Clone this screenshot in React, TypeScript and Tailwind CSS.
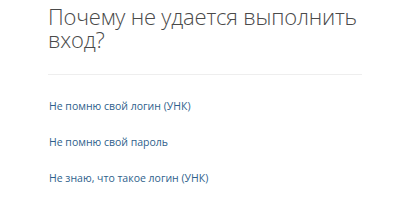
export default function App() {
  const links = [
    "Не помню свой логин (УНК)",
    "Не помню свой пароль",
    "Не знаю, что такое логин (УНК)",
  ];
  return (
    <div className="w-[400px] h-[200px] bg-white overflow-hidden" style={{ fontFamily: '"Open Sans", sans-serif' }}>
      <div className="ml-[48px] w-[314px] pt-[5px]">
        <h1 className="text-[22px] leading-[23px] font-light text-[#4a4a4a] tracking-[-0.2px]">
          Почему не удается выполнить вход?
        </h1>
        <div className="mt-[23px] h-px bg-[#eeeeee]" />
        <div className="mt-[24px] flex flex-col gap-[22px]">
          {links.map((l) => (
            <a key={l} className="text-[10.5px] leading-[14px] text-[#2f5f8c] pl-[1px]">
              {l}
            </a>
          ))}
        </div>
      </div>
    </div>
  );
}
